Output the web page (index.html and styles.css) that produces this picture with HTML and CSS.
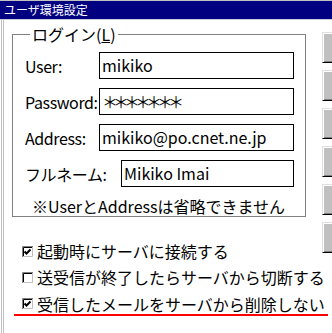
FILE: index.html
```html
<!DOCTYPE html>
<html lang="ja">
<head>
<meta charset="utf-8">
<link rel="stylesheet" href="styles.css">
</head>
<body>
<div class="window">
  <div class="titlebar">ユーザ環境設定</div>
  <div class="content">
    <div class="main">
      <fieldset class="group">
        <legend class="legend">ログイン(<u>L</u>)</legend>
        <div class="row"><span class="label">User:</span><div class="field">mikiko</div></div>
        <div class="row"><span class="label">Password:</span><div class="field field-pass">＊＊＊＊＊＊＊</div></div>
        <div class="row"><span class="label">Address:</span><div class="field">mikiko@po.cnet.ne.jp</div></div>
        <div class="row"><span class="label label-wide">フルネーム:</span><div class="field">Mikiko Imai</div></div>
        <p class="note">※UserとAddressは省略できません</p>
      </fieldset>
      <div class="checks">
        <div class="check">
          <svg class="box" width="11" height="11" viewBox="0 0 11 11"><rect x="0" y="0" width="11" height="11" fill="#fff"/><path d="M0.5 11V0.5H11" fill="none" stroke="#808080"/><path d="M1.5 10V1.5H10" fill="none" stroke="#000"/><path d="M1 10.5H10.5V1" fill="none" stroke="#c0c0c0"/><path d="M2.5 5.5L4.5 7.5L8.5 3.5" fill="none" stroke="#000" stroke-width="2"/></svg>
          <span>起動時にサーバに接続する</span>
        </div>
        <div class="check">
          <svg class="box" width="11" height="11" viewBox="0 0 11 11"><rect x="0" y="0" width="11" height="11" fill="#fff"/><path d="M0.5 11V0.5H11" fill="none" stroke="#808080"/><path d="M1.5 10V1.5H10" fill="none" stroke="#000"/><path d="M1 10.5H10.5V1" fill="none" stroke="#c0c0c0"/></svg>
          <span>送受信が終了したらサーバから切断する</span>
        </div>
        <div class="check check-marked">
          <svg class="box" width="11" height="11" viewBox="0 0 11 11"><rect x="0" y="0" width="11" height="11" fill="#fff"/><path d="M0.5 11V0.5H11" fill="none" stroke="#808080"/><path d="M1.5 10V1.5H10" fill="none" stroke="#000"/><path d="M1 10.5H10.5V1" fill="none" stroke="#c0c0c0"/><path d="M2.5 5.5L4.5 7.5L8.5 3.5" fill="none" stroke="#000" stroke-width="2"/></svg>
          <span>受信したメールをサーバから削除しない</span>
        </div>
      </div>
    </div>
    <div class="buttons">
      <div class="btn"></div>
      <div class="btn"></div>
      <div class="btn"></div>
      <div class="btn"></div>
      <div class="btn"></div>
      <div class="btn"></div>
    </div>
  </div>
</div>
</body>
</html>
```

FILE: styles.css
```css
* { box-sizing: border-box; }
html, body {
  margin: 0;
  padding: 0;
  background: #fff;
}
body {
  font-family: "Noto Sans CJK JP", "Liberation Sans", sans-serif;
  font-size: 16px;
  color: #000;
}
.window {
  width: 332px;
  height: 333px;
  overflow: hidden;
  background: #fff;
}
.titlebar {
  height: 20px;
  background: #000080;
  border-top: 1px solid #c0c0c0;
  border-bottom: 1px solid #c8c8d8;
  color: #fff;
  font-size: 12px;
  line-height: 18px;
  padding-left: 4px;
  white-space: nowrap;
}
.content {
  display: flex;
  height: 313px;
  padding-left: 12px;
  background: linear-gradient(to right, #fff 0 1px, #c0c0c0 1px 2px, #fff 2px 3px, #c0c0c0 3px 4px, #fff 4px);
}
.main {
  width: 294px;
  flex: none;
}
.group {
  margin: 4px 0 0 0;
  padding: 8px 11px 0 12px;
  border: 1px solid #808080;
  height: 193px;
}
.legend {
  margin-left: 5px;
  padding: 0 2px;
  line-height: 20px;
  height: 20px;
}
.row {
  display: flex;
  align-items: center;
  height: 27px;
  margin-bottom: 9px;
}
.label {
  width: 74px;
  flex: none;
  white-space: nowrap;
  letter-spacing: -0.4px;
}
.label-wide {
  width: 96px;
}
.field {
  flex: 1;
  height: 27px;
  border: 1px solid #000;
  padding-left: 2px;
  line-height: 25px;
  white-space: nowrap;
  overflow: hidden;
}
.field-pass {
  letter-spacing: -5px;
}
.note {
  margin: 0 0 0 7px;
  line-height: 20px;
  white-space: nowrap;
}
.checks {
  padding-left: 10px;
  padding-top: 24px;
}
.check {
  display: flex;
  align-items: center;
  gap: 4px;
  height: 20px;
  margin-bottom: 6px;
  white-space: nowrap;
}
.check-marked {
  margin-top: 3px;
  margin-left: -8px;
  padding-left: 8px;
  width: 314px;
  height: 23px;
  border-bottom: 2px solid #ff0000;
}
.box {
  flex: none;
}
.buttons {
  margin-left: 16px;
  padding-top: 12px;
  display: flex;
  flex-direction: column;
  gap: 7px;
}
.btn {
  width: 24px;
  height: 31px;
  background: #c0c0c0;
  border-top: 1px solid #dfdfdf;
  border-left: 1px solid #dfdfdf;
  border-bottom: 1px solid #000;
  box-shadow: inset 1px 1px #fff, inset 0 -1px #808080;
}
```
